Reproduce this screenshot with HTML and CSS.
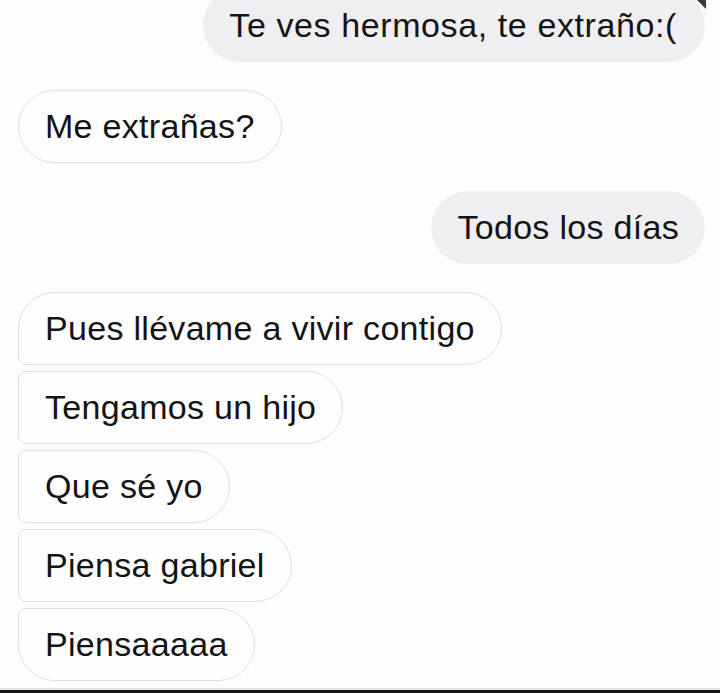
FILE: index.html
```html
<!DOCTYPE html>
<html lang="es">
<head>
  <meta charset="UTF-8" />
  <meta name="viewport" content="width=device-width, initial-scale=1.0" />
  <title>Chat</title>
  <link rel="stylesheet" href="styles.css">
</head>
<body>
  <div class="screen">
    <div class="chat">
      <div class="row sent first">
        <div class="bubble wide">Te ves hermosa, te extraño:(</div>
      </div>
      <div class="row received gap">
        <div class="bubble">Me extrañas?</div>
      </div>
      <div class="row sent gap">
        <div class="bubble">Todos los días</div>
      </div>
      <div class="group gap">
        <div class="row received"><div class="bubble top">Pues llévame a vivir contigo</div></div>
        <div class="row received"><div class="bubble mid">Tengamos un hijo</div></div>
        <div class="row received"><div class="bubble mid">Que sé yo</div></div>
        <div class="row received"><div class="bubble mid">Piensa gabriel</div></div>
        <div class="row received"><div class="bubble end">Piensaaaaa</div></div>
      </div>
    </div>
    <div class="bar"></div>
    <span class="corner"></span>
  </div>
</body>
</html>
```

FILE: styles.css
```css
body {
  margin: 0;
  background: #fdfdfe;
  font-family: 'Liberation Sans', Arial, sans-serif;
  color: #141414;
}
.screen {
  position: relative;
  height: 693px;
  display: flex;
  flex-direction: column;
  overflow: hidden;
}
.chat {
  flex: 1;
  display: flex;
  flex-direction: column;
  padding: 0 15px 0 18px;
}
.row {
  display: flex;
}
.row.sent {
  justify-content: flex-end;
}
.row.first {
  margin-top: -11px;
}
.gap {
  margin-top: 28px;
}
.group {
  display: flex;
  flex-direction: column;
  gap: 6px;
}
.bubble {
  box-sizing: border-box;
  height: 73px;
  padding: 0 26px;
  display: flex;
  align-items: center;
  font-size: 34px;
  letter-spacing: 0.3px;
  border-radius: 37px;
  white-space: nowrap;
}
.bubble.wide {
  letter-spacing: 0.6px;
  padding-right: 28px;
}
.sent .bubble {
  background: #efeff1;
}
.received .bubble {
  background: #fefefe;
  border: 1.5px solid #dedede;
}
.bubble.top {
  border-radius: 37px 37px 37px 8px;
}
.bubble.mid {
  border-radius: 8px 37px 37px 8px;
}
.bubble.end {
  border-radius: 8px 37px 37px 37px;
}
.bar {
  height: 3px;
  background: #161616;
  border-top: 2px solid #e4e4e6;
}
.corner {
  position: absolute;
  top: 0;
  right: 14px;
  width: 0;
  height: 0;
  border-top: 9px solid #3a3a3c;
  border-left: 9px solid transparent;
}
```
